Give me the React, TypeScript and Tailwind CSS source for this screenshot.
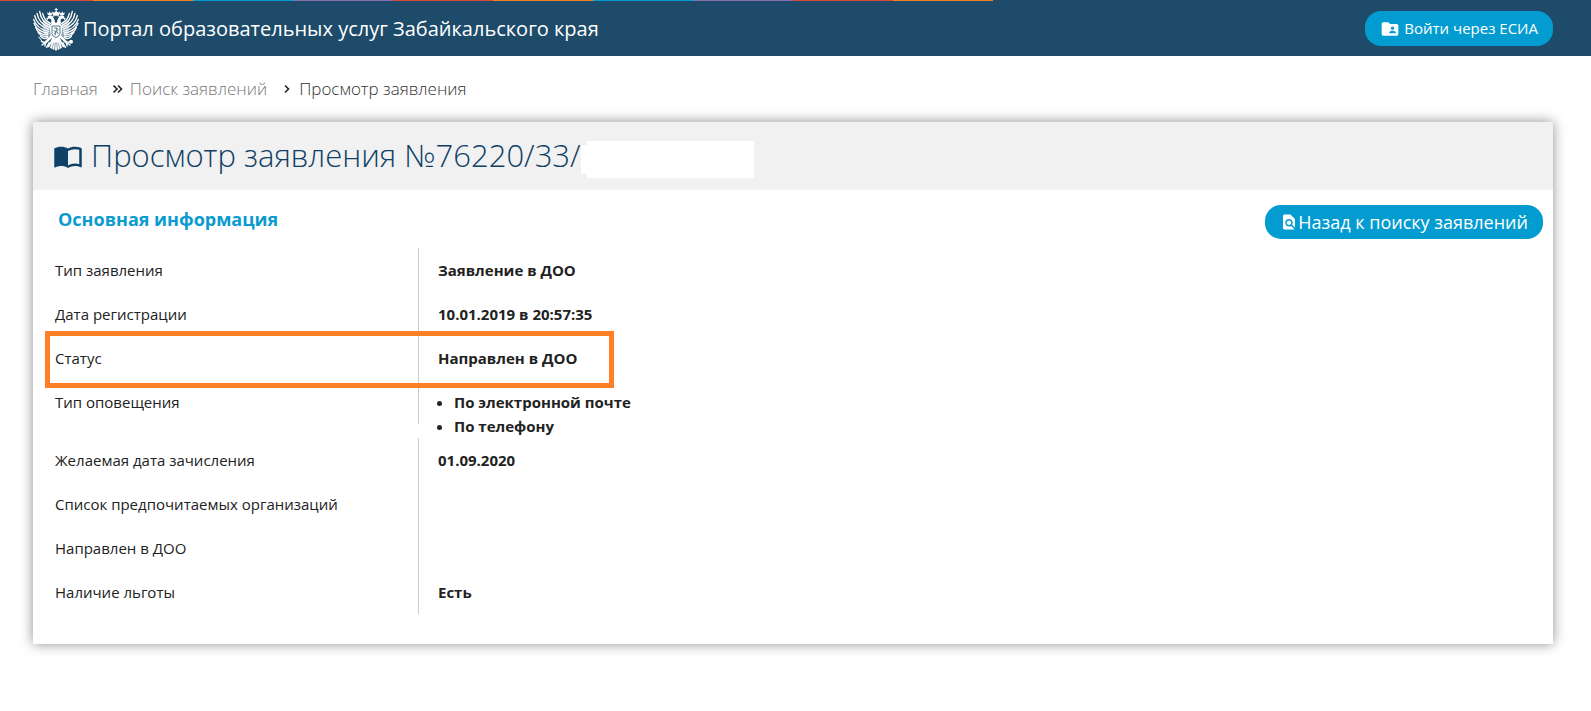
import React from 'react';
import { MdFindInPage, MdFolderShared } from 'react-icons/md';

type Row = {
  label: string;
  value?: string;
  list?: string[];
  highlighted?: boolean;
};

const rows: Row[] = [
  { label: 'Тип заявления', value: 'Заявление в ДОО' },
  { label: 'Дата регистрации', value: '10.01.2019 в 20:57:35' },
  { label: 'Статус', value: 'Направлен в ДОО', highlighted: true },
  { label: 'Тип оповещения', list: ['По электронной почте', 'По телефону'] },
  { label: 'Желаемая дата зачисления', value: '01.09.2020' },
  { label: 'Список предпочитаемых организаций' },
  { label: 'Направлен в ДОО' },
  { label: 'Наличие льготы', value: 'Есть' },
];

const stripes = [
  'bg-[#d9483b]',
  'bg-[#f58220]',
  'bg-[#039cd0]',
  'bg-[#8a6fb0]',
  'bg-[#d9483b]',
  'bg-[#f58220]',
  'bg-[#039cd0]',
  'bg-[#8a6fb0]',
  'bg-[#d9483b]',
  'bg-[#f58220]',
];

// One side of the eagle, the other one is its mirror image
function EagleHalf() {
  return (
    <g>
      <g fill="none" stroke="#fff" strokeWidth="4" strokeLinecap="round">
        <path d="M60 64 Q34 54 29 22" />
        <path d="M58 70 Q26 58 21 28" />
        <path d="M56 76 Q20 64 14 35" />
        <path d="M55 82 Q20 74 11 46" />
        <path d="M54 87 Q22 84 12 58" />
        <path d="M53 92 Q26 92 17 71" />
        <path d="M53 97 Q32 100 24 84" />
        <path d="M54 100 Q40 108 32 97" />
        <path d="M61 58 Q42 48 38 28" />
      </g>
      <path d="M40 46 Q52 52 62 56 L60 98 L44 94 Q34 74 40 46 Z" fillOpacity="0.5" />
      <path d="M71 62 L63 58 C64 50 66 47 61 44 C57 42 53 44 53 49 L48 44 L53 42 C51 36 57 33 63 35 C71 38 74 46 76 58 Z" />
      <path d="M54 33 L51 25 L56 28 L59 22 L62 28 L67 26 L64 35 Z" />
      <path d="M70 26 Q62 26 63 33 M66 39 Q70 34 73 38" fill="none" stroke="#fff" strokeWidth="2.5" />
      <g fill="none" stroke="#fff" strokeLinecap="round">
        <path d="M66 96 Q56 106 46 116" strokeWidth="8" />
        <path d="M46 116 L34 112 M46 116 L36 123 M46 116 L45 126" strokeWidth="4" />
        <path d="M68 104 L56 128 M72 104 L64 132 M58 116 L50 130" strokeWidth="4.5" />
      </g>
      <path d="M78 102 L66 110 L60 132 L66 130 L69 138 L74 135 L78 142 Z" />
      <path d="M72 116 L67 131 M76 116 L74 135" fill="none" stroke="#1d4b69" strokeWidth="1.5" />
    </g>
  );
}

function Emblem() {
  return (
    <svg viewBox="0 0 156 150" className="h-[50px] w-[52px] shrink-0" fill="#fff" aria-hidden="true">
      <EagleHalf />
      <g transform="translate(156 0) scale(-1 1)">
        <EagleHalf />
      </g>
      <path d="M77 12 H80 V15 H83 V18 H80 V22 L86 26 L90 22 L87 35 H69 L67 22 L72 26 L77 22 V18 H74 V15 H77 Z" />
      <path d="M66 56 H90 L97 68 L95 92 L88 106 H68 L61 92 L59 68 Z" />
      <path d="M66 66 H90 V89 Q90 96 78 101 Q66 96 66 89 Z" fill="none" stroke="#1d4b69" strokeWidth="2.2" />
      <path d="M72 72 L80 72 L85 77 L80 83 L85 90 M71 80 L77 83 L73 91 M80 72 L76 94" fill="none" stroke="#1d4b69" strokeWidth="2" />
      <path d="M42 120 L26 98" fill="none" stroke="#fff" strokeWidth="3" />
      <circle cx="123" cy="113" r="6" />
    </svg>
  );
}

function BookIcon() {
  return (
    <svg viewBox="0 0 24 24" className="size-[30px] shrink-0" fill="currentColor" aria-hidden="true">
      <path d="M21,5C19.89,4.65 18.67,4.5 17.5,4.5C15.55,4.5 13.45,4.9 12,6C10.55,4.9 8.45,4.5 6.5,4.5C4.55,4.5 2.45,4.9 1,6V20.65C1,20.9 1.25,21.15 1.5,21.15C1.6,21.15 1.65,21.1 1.75,21.1C3.1,20.45 5.05,20 6.5,20C8.45,20 10.55,20.4 12,21.5C13.35,20.65 15.8,20 17.5,20C19.15,20 20.85,20.3 22.25,21.05C22.35,21.1 22.4,21.1 22.5,21.1C22.75,21.1 23,20.85 23,20.6V6C22.4,5.55 21.75,5.25 21,5M21,18.5C19.9,18.15 18.7,18 17.5,18C15.8,18 13.35,18.65 12,19.5V8C13.35,7.15 15.8,6.5 17.5,6.5C18.7,6.5 19.9,6.65 21,7V18.5Z" />
    </svg>
  );
}

function Chevrons({ double = false }: { double?: boolean }) {
  return (
    <svg
      viewBox="0 0 12 12"
      className="size-3 shrink-0"
      fill="none"
      stroke="#222"
      strokeWidth="1.6"
      aria-hidden="true"
    >
      {double ? <path d="M1.5 2.5 L5 6 L1.5 9.5 M6 2.5 L9.5 6 L6 9.5" /> : <path d="M4 2.5 L7.5 6 L4 9.5" />}
    </svg>
  );
}

function Header() {
  return (
    <header className="bg-[#1d4b69] text-white">
      <div className="flex h-px overflow-hidden">
        {stripes.map((color, i) => (
          <div key={i} className={`w-[100px] shrink-0 first:w-[93px] ${color}`} />
        ))}
      </div>
      <div className="flex h-[55px] items-center justify-between pr-[38px] pl-[30px]">
        <a href="#" className="flex items-center gap-px text-xl">
          <Emblem />
          Портал образовательных услуг Забайкальского края
        </a>
        <button type="button" className="flex h-[35px] items-center gap-1 rounded-2xl bg-[#039cd0] px-[15px] text-[15px]">
          <MdFolderShared className="size-5" />
          Войти через ЕСИА
        </button>
      </div>
    </header>
  );
}

function Breadcrumbs() {
  return (
    <nav className="flex items-center px-[33px] pt-[21px] text-[17px] leading-6 font-light text-[#777]">
      <a href="#" className="mr-[14px]">Главная</a>
      <Chevrons double />
      <a href="#" className="mr-[14px] ml-[6px]">Поиск заявлений</a>
      <Chevrons />
      <span className="ml-[6px] text-[#333]">Просмотр заявления</span>
    </nav>
  );
}

function InfoRow({ row }: { row: Row }) {
  return (
    <div className="relative flex items-start">
      <dt className="h-11 w-1/4 border-r border-[#ccc] py-[10px] pl-[14px]">{row.label}</dt>
      <dd className="pt-[10px] pl-[19px] font-bold">
        {row.list ? (
          <ul className="list-disc pl-4">
            {row.list.map((item) => (
              <li key={item}>{item}</li>
            ))}
          </ul>
        ) : (
          row.value
        )}
      </dd>
      {row.highlighted && (
        <div className="pointer-events-none absolute -top-[5px] left-1 z-10 h-[57px] w-[569px] border-5 border-[#ff7f27]" />
      )}
    </div>
  );
}

export default function App() {
  return (
    <div className="min-h-screen bg-white font-['Open_Sans',sans-serif] text-[#222]">
      <Header />
      <Breadcrumbs />

      <main className="mt-[21px] mr-[38px] ml-[33px] bg-white pb-[30px] shadow-[0_0_12px_rgba(0,0,0,0.45)]">
        <div className="flex h-[68px] items-center bg-[#f1f1f1] pl-5 text-[#0f4066]">
          <BookIcon />
          <h1 className="ml-2 pb-0.5 text-[31px] leading-9 font-light">Просмотр заявления №76220/33/</h1>
          <div className="flex items-center pt-[6px]">
            <div className="h-[29px] w-[6px] bg-white" />
            <div className="h-[37px] w-[167px] bg-white" />
          </div>
        </div>

        <div className="flex h-[58px] items-start justify-between pt-[15px] pr-[10px] pl-[25px]">
          <h2 className="text-lg leading-7 font-bold text-[#0a9bcf]">Основная информация</h2>
          <a href="#" className="flex h-[34px] items-center rounded-2xl bg-[#039cd0] px-[15px] text-lg text-white">
            <MdFindInPage className="size-[18px]" />
            Назад к поиску заявлений
          </a>
        </div>

        <dl className="pl-2 text-[15px] leading-6">
          {rows.map((row) => (
            <InfoRow key={row.label} row={row} />
          ))}
        </dl>
      </main>
    </div>
  );
}
